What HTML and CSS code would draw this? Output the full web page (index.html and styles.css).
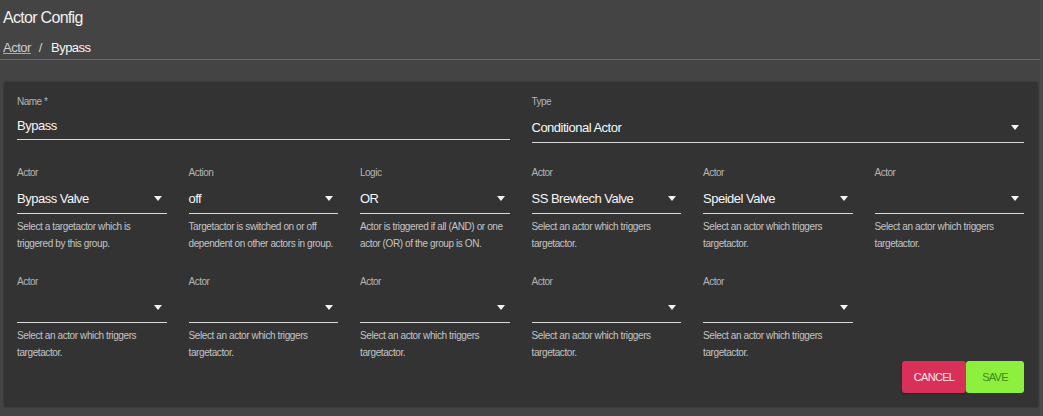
FILE: index.html
```html
<!DOCTYPE html>
<html lang="en">
<head>
<meta charset="utf-8">
<title>Actor Config</title>
<link rel="stylesheet" href="styles.css">
</head>
<body>
<header class="page-head">
  <h1 class="title">Actor Config</h1>
  <nav class="crumbs"><a class="crumb-link" href="#">Actor</a><span class="crumb-sep">/</span><span class="crumb-current">Bypass</span></nav>
</header>
<main class="card">
  <div class="grid">
    <div class="field span3">
      <div class="label">Name *</div>
      <div class="control input"><span class="value">Bypass</span></div>
    </div>
    <div class="field span3">
      <div class="label">Type</div>
      <div class="control select"><span class="value">Conditional Actor</span><span class="caret"></span></div>
    </div>

    <div class="field">
      <div class="label">Actor</div>
      <div class="control select"><span class="value">Bypass Valve</span><span class="caret"></span></div>
      <div class="help">Select a targetactor which is triggered by this group.</div>
    </div>
    <div class="field">
      <div class="label">Action</div>
      <div class="control select"><span class="value">off</span><span class="caret"></span></div>
      <div class="help">Targetactor is switched on or off dependent on other actors in group.</div>
    </div>
    <div class="field">
      <div class="label">Logic</div>
      <div class="control select"><span class="value">OR</span><span class="caret"></span></div>
      <div class="help">Actor is triggered if all (AND) or one actor (OR) of the group is ON.</div>
    </div>
    <div class="field">
      <div class="label">Actor</div>
      <div class="control select"><span class="value">SS Brewtech Valve</span><span class="caret"></span></div>
      <div class="help">Select an actor which triggers targetactor.</div>
    </div>
    <div class="field">
      <div class="label">Actor</div>
      <div class="control select"><span class="value">Speidel Valve</span><span class="caret"></span></div>
      <div class="help">Select an actor which triggers targetactor.</div>
    </div>
    <div class="field">
      <div class="label">Actor</div>
      <div class="control select"><span class="value"></span><span class="caret"></span></div>
      <div class="help">Select an actor which triggers targetactor.</div>
    </div>

    <div class="field">
      <div class="label">Actor</div>
      <div class="control select"><span class="value"></span><span class="caret"></span></div>
      <div class="help">Select an actor which triggers targetactor.</div>
    </div>
    <div class="field">
      <div class="label">Actor</div>
      <div class="control select"><span class="value"></span><span class="caret"></span></div>
      <div class="help">Select an actor which triggers targetactor.</div>
    </div>
    <div class="field">
      <div class="label">Actor</div>
      <div class="control select"><span class="value"></span><span class="caret"></span></div>
      <div class="help">Select an actor which triggers targetactor.</div>
    </div>
    <div class="field">
      <div class="label">Actor</div>
      <div class="control select"><span class="value"></span><span class="caret"></span></div>
      <div class="help">Select an actor which triggers targetactor.</div>
    </div>
    <div class="field">
      <div class="label">Actor</div>
      <div class="control select"><span class="value"></span><span class="caret"></span></div>
      <div class="help">Select an actor which triggers targetactor.</div>
    </div>
  </div>
  <div class="actions">
    <button class="btn btn-cancel" type="button">CANCEL</button>
    <button class="btn btn-save" type="button">SAVE</button>
  </div>
</main>
</body>
</html>
```
FILE: styles.css
```css
html, body {
  margin: 0;
  padding: 0;
}
body {
  background: #444444;
  color: #ffffff;
  font-family: "Liberation Sans", Arial, sans-serif;
  width: 1040px;
  height: 416px;
  overflow: hidden;
  border-right: 3px solid #4b4b4b;
}
.page-head {
  border-bottom: 1px solid #6c6c6c;
  padding: 0 0 2px 3px;
}
.title {
  margin: 0;
  font-weight: normal;
  font-size: 16px;
  letter-spacing: -0.7px;
  line-height: 20px;
  padding-top: 8px;
  color: #f2f2f2;
}
.crumbs {
  display: flex;
  align-items: center;
  margin-top: 11px;
  font-size: 13px;
  letter-spacing: -0.5px;
  line-height: 18px;
  height: 18px;
}
.crumb-link {
  color: #cfcfcf;
  text-decoration: underline;
  text-decoration-color: #aaaaaa;
}
.crumb-sep {
  color: #cfcfcf;
  margin: 0 9px 0 8px;
}
.crumb-current {
  color: #f4f4f4;
}
.card {
  margin: 22px 2px 0 4px;
  background: #333333;
  border-radius: 2px;
  box-shadow: 0 0 2px rgba(0,0,0,0.45);
  padding: 14px 14px 14px 13px;
}
.grid {
  display: grid;
  grid-template-columns: repeat(6, 1fr);
  column-gap: 22px;
  row-gap: 24px;
}
.span3 {
  grid-column: span 3;
}
.field {
  display: flex;
  flex-direction: column;
}
.label {
  font-size: 10px;
  letter-spacing: -0.5px;
  line-height: 12px;
  height: 12px;
  color: #b4b4b4;
}
.control {
  display: flex;
  align-items: flex-end;
  justify-content: space-between;
  box-sizing: border-box;
  border-bottom: 1px solid #d8d8d8;
}
.control.input {
  height: 32px;
  padding-bottom: 4px;
}
.control.select {
  height: 35px;
  padding-bottom: 5px;
  padding-right: 5px;
}
.value {
  font-size: 13px;
  letter-spacing: -0.5px;
  line-height: 18px;
  color: #f6f6f6;
  white-space: nowrap;
}
.caret {
  width: 0;
  height: 0;
  border-left: 4px solid transparent;
  border-right: 4px solid transparent;
  border-top: 5px solid #f4f4f4;
  margin-bottom: 7px;
}
.help {
  margin-top: 4px;
  font-size: 10px;
  letter-spacing: -0.4px;
  line-height: 17px;
  color: #c4c4c4;
}
.actions {
  display: flex;
  justify-content: flex-end;
}
.btn {
  height: 32px;
  border: none;
  border-radius: 3px;
  font-family: inherit;
  font-size: 11px;
  letter-spacing: -0.7px;
  padding: 0;
  cursor: pointer;
}
.btn-cancel {
  background: #d9305a;
  color: #fbe4ea;
  width: 64px;
  box-shadow: 0 1px 2px rgba(0,0,0,0.35);
}
.btn-save {
  background: #8cf03c;
  color: #3e8a1e;
  width: 58px;
}
```
